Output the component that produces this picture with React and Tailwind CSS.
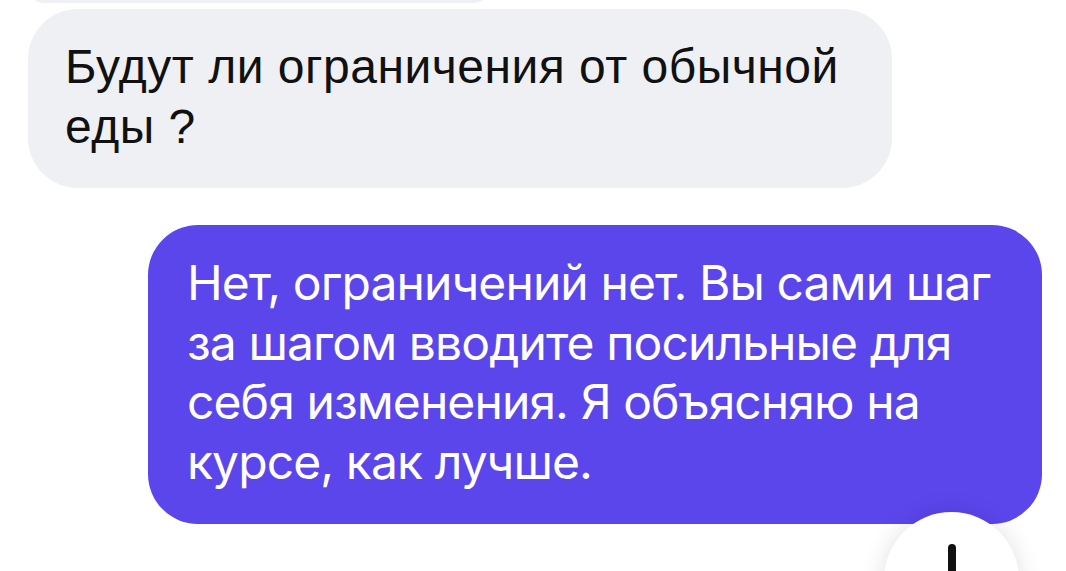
import React from "react";

const ScrollDownButton = () => (
  <button
    type="button"
    className="absolute left-[884px] top-[512px] flex h-[135px] w-[135px] items-start justify-center rounded-full bg-white shadow-[0_0_24px_rgba(0,0,0,0.12)]"
  >
    <svg
      width="60"
      height="90"
      viewBox="0 0 60 90"
      fill="none"
      stroke="#111"
      strokeWidth="8"
      strokeLinecap="round"
      strokeLinejoin="round"
      className="mt-[32px]"
    >
      <path d="M30 4 V76" />
      <path d="M8 54 L30 76 L52 54" />
    </svg>
  </button>
);

export default function App() {
  return (
    <div className="relative h-[571px] w-[1066px] overflow-hidden bg-white font-['Liberation_Sans',Arial,sans-serif]">
      <div className="flex flex-col">
        {/* tail of the previous incoming message */}
        <div className="-mt-[37px] ml-[25px] h-[40px] w-[468px] rounded-[48px] bg-[#eff0f4]" />

        {/* incoming message */}
        <div className="ml-[28px] mt-[6px] w-[864px] rounded-[50px] bg-[#eff0f4] pb-[31px] pl-[37px] pr-[30px] pt-[28px]">
          <p className="text-[48px] leading-[60px] tracking-[0.5px] text-[#111] whitespace-nowrap">
            Будут ли ограничения от обычной
            <br />
            еды ?
          </p>
        </div>

        {/* outgoing message */}
        <div className="ml-[148px] mt-[37px] w-[894px] rounded-[50px] bg-[#5b46ec] pb-[33px] pl-[39px] pr-[30px] pt-[28px]">
          <p className="font-['Inter',sans-serif] text-[48px] leading-[59.5px] tracking-[-0.9px] text-white whitespace-nowrap">
            Нет, ограничений нет. Вы сами шаг
            <br />
            за шагом вводите посильные для
            <br />
            себя изменения. Я объясняю на
            <br />
            курсе, как лучше.
          </p>
        </div>
      </div>

      <ScrollDownButton />
    </div>
  );
}
